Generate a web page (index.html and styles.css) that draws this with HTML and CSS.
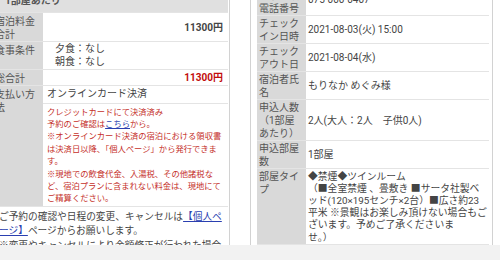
FILE: index.html
```html
<!DOCTYPE html>
<html lang="ja">
<head>
<meta charset="utf-8">
<link rel="stylesheet" href="styles.css">
</head>
<body>
<div class="stage">
  <section class="panel left">
    <table class="info info-left">
      <colgroup><col class="c-label"><col></colgroup>
      <tr><th colspan="2" class="head">1部屋あたり</th></tr>
      <tr><th>宿泊料金合計</th><td class="num">11300円</td></tr>
      <tr><th>食事条件</th><td class="meal">夕食：なし<br>朝食：なし</td></tr>
      <tr><th>総合計</th><td class="num red">11300円</td></tr>
      <tr><th rowspan="2">支払い方法</th><td class="pay">オンラインカード決済</td></tr>
      <tr><td class="note">クレジットカードにて決済済み<br>予約のご確認は<a href="#">こちら</a>から。<br>※オンラインカード決済の宿泊における領収書は決済日以降、「個人ページ」から発行できます。<br>※現地での飲食代金、入湯税、その他諸税など、宿泊プランに含まれない料金は、現地にてご精算ください。</td></tr>
    </table>
    <p class="foot">ご予約の確認や日程の変更、キャンセルは<a href="#">【個人ページ】</a>ページからお願いします。<br>※変更やキャンセルにより金額修正が行われた場合</p>
  </section>
  <section class="panel right">
    <table class="info info-right">
      <colgroup><col class="c-label"><col></colgroup>
      <tr><th>宿泊施設電話番号</th><td class="phone">075-000-0407</td></tr>
      <tr><th>チェックイン日時</th><td>2021-08-03(火) 15:00</td></tr>
      <tr><th>チェックアウト日</th><td>2021-08-04(水)</td></tr>
      <tr><th>宿泊者氏名</th><td>もりなか めぐみ様</td></tr>
      <tr><th>申込人数（1部屋あたり）</th><td>2人(大人：2人　子供0人)</td></tr>
      <tr><th>申込部屋数</th><td>1部屋</td></tr>
      <tr><th>部屋タイプ</th><td class="room">◆禁煙◆ツインルーム<br>（■全室禁煙 、畳敷き ■サータ社製ベ<br>ッド(120×195センチ×2台）■広さ約23<br>平米 ※景観はお楽しみ頂けない場合もご<br>ざいます。予めご了承くださいま<br>せ。）</td></tr>
    </table>
  </section>
</div>
</body>
</html>
```

FILE: styles.css
```css
body {
  margin: 0;
  background: #f2f2f2;
  font-family: Roboto, "Noto Sans CJK JP", sans-serif;
  font-size: 10px;
  color: #444;
  line-break: normal;
}

.stage {
  height: 245px;
  background: #fff;
  display: flex;
  align-items: flex-start;
  gap: 20px;
  overflow: hidden;
}

.panel {
  background: #fff;
}

.left {
  margin-left: -7px;
  margin-top: -5px;
  width: 235px;
  padding-right: 1px;
  border-right: 1px solid #d2d2d2;
  height: 265px;
}

.right {
  margin-top: -12px;
  width: 232px;
  padding: 0 3px 0 6px;
  border-left: 1px solid #d2d2d2;
  border-right: 1px solid #d2d2d2;
  border-bottom: 1px solid #e2e2e2;
}

.info {
  width: 100%;
  border-collapse: collapse;
  table-layout: fixed;
}

.info-left .c-label { width: 50px; }
.info-right .c-label { width: 49px; }

.info th,
.info td {
  border-bottom: 1px solid #e4e4e4;
  line-height: 13px;
  padding: 0.5px 2px;
}

.info th {
  background: #d9d9d9;
  color: #555;
  font-weight: normal;
  text-align: left;
  vertical-align: top;
}

.info td {
  vertical-align: middle;
  color: #444;
}

.info th.head {
  background: #e0e0e0;
  font-weight: bold;
  color: #555;
  padding: 0 0 5px 12px;
  line-height: 12px;
}

.info-left th {
  padding-top: 1.5px;
}

.num {
  text-align: right;
  font-weight: bold;
  color: #333;
}

.info td.num {
  padding-right: 5px;
}

.info td.red {
  color: #c20c0c;
}

.info td.meal {
  padding: 1px 4px 1px 12px;
  line-height: 12.5px;
}

.info td.pay {
  padding: 2px 4px;
  line-height: 12.5px;
}

.info td.note {
  padding: 2px 3px 1px 4px;
  font-size: 8.3px;
  line-height: 12.4px;
  color: #c5302a;
}

.note a,
.foot a {
  color: #2a3fb0;
  text-decoration: underline;
}

.foot {
  margin: 0;
  padding: 3px 3px 0 6px;
  font-size: 9.7px;
  line-height: 14.5px;
  color: #444;
}

.info-right td {
  padding-left: 2px;
}

.info td.phone {
  padding-bottom: 5px;
}

.info td.room {
  font-size: 9.8px;
  line-height: 12.2px;
  vertical-align: top;
  padding-top: 1.5px;
  white-space: nowrap;
}
```
